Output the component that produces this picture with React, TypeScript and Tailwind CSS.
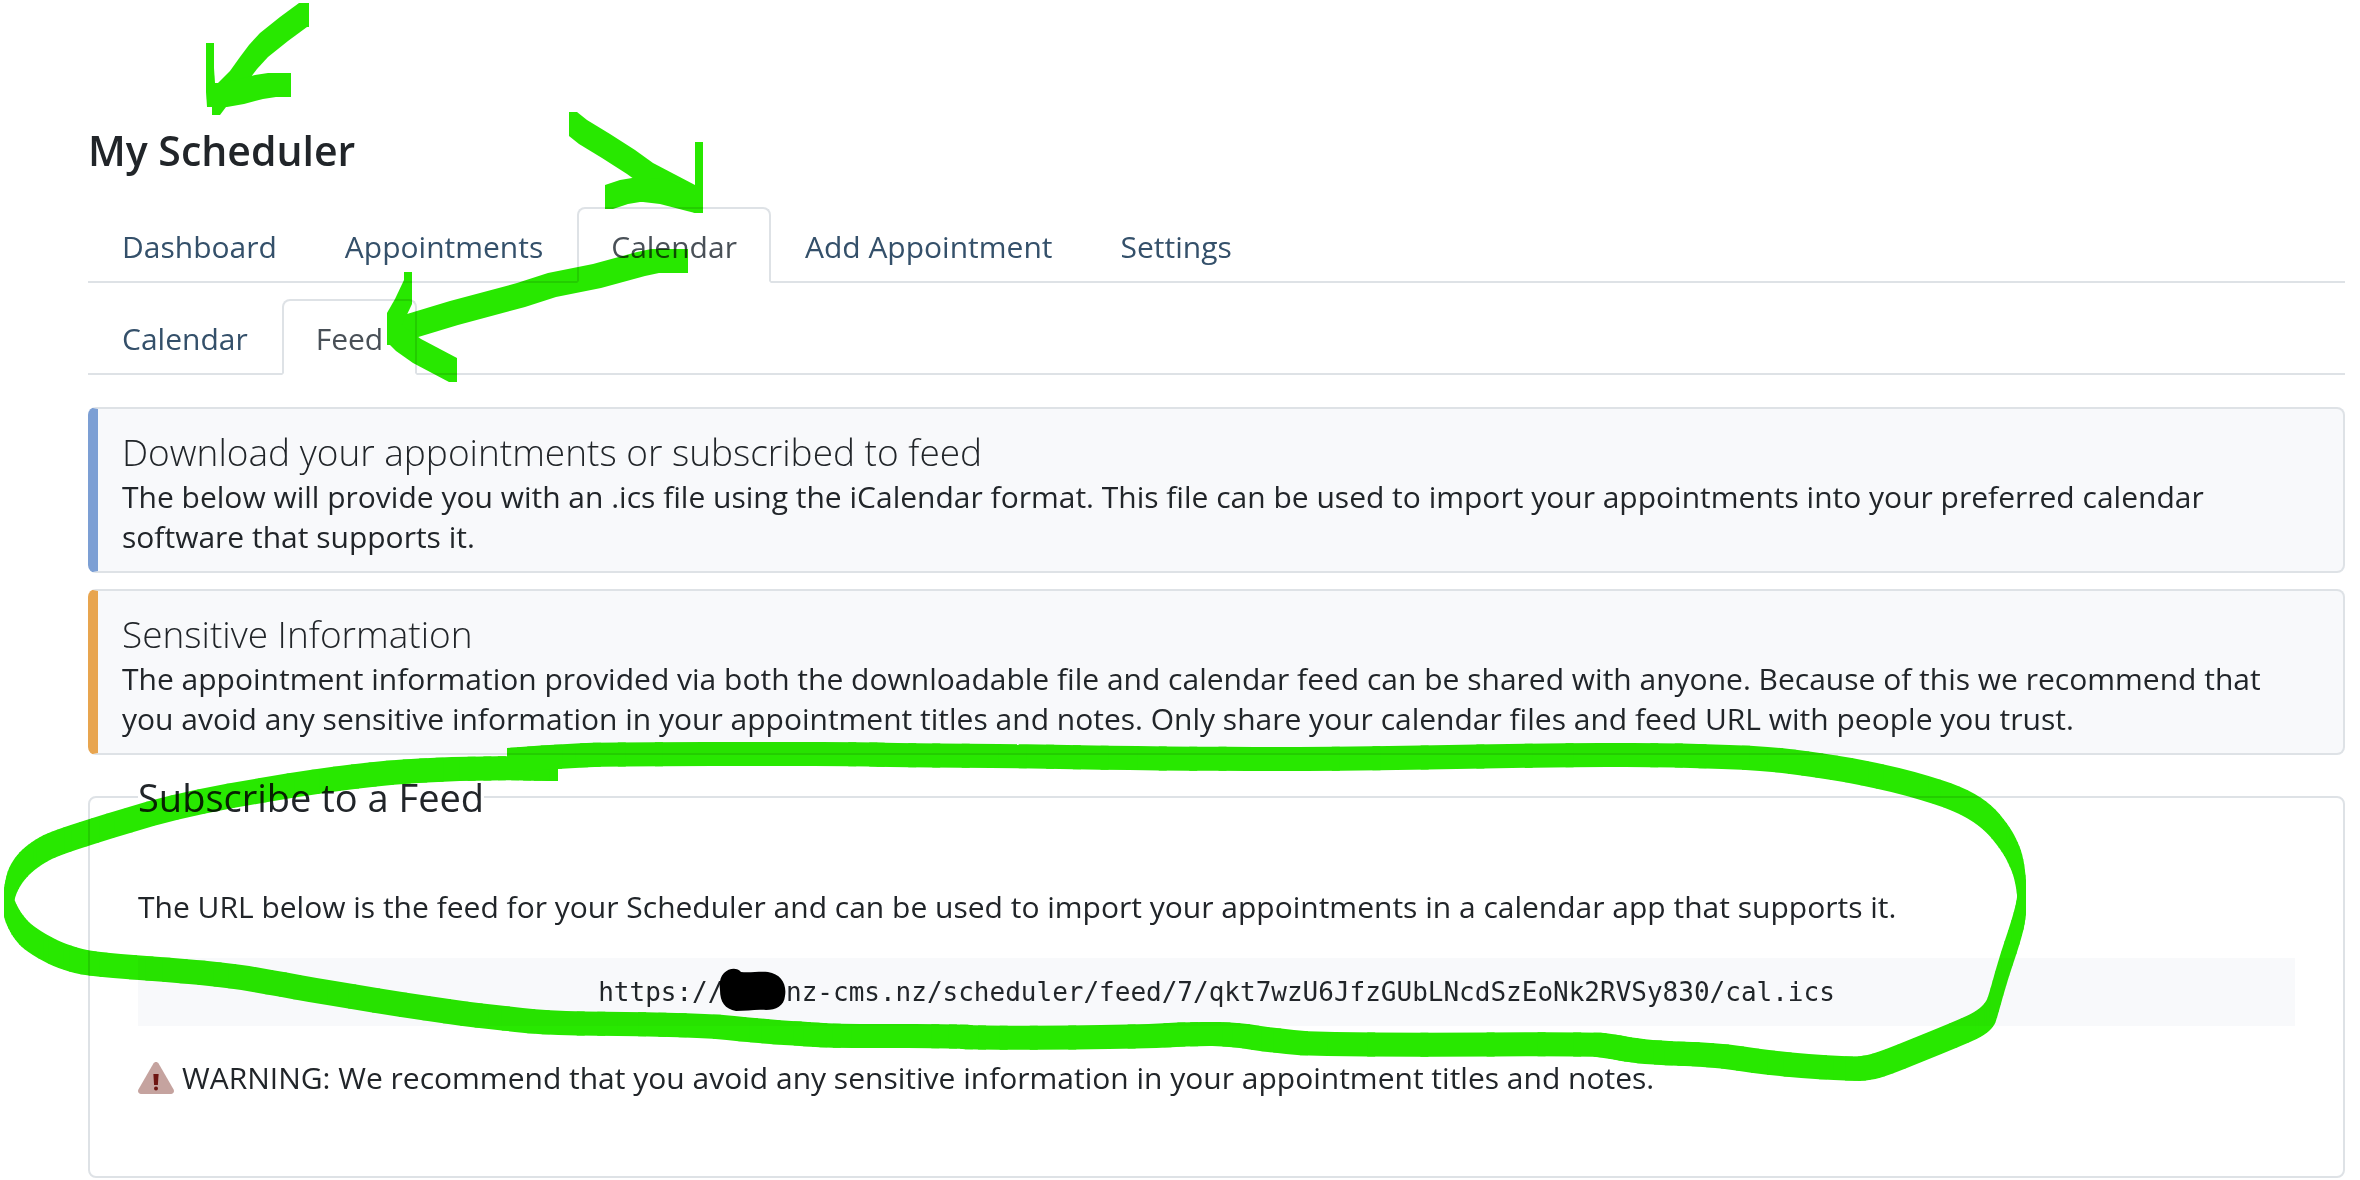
import { useState } from "react"
import clsx from "clsx"

type Point = [number, number]

const mainTabs = ["Dashboard", "Appointments", "Calendar", "Add Appointment", "Settings"]
const calendarTabs = ["Calendar", "Feed"]

// pen strokes, each one a list of pen positions
const arrows: Point[][] = [
  [[305, 15], [303, 15], [284, 29], [264, 45], [253, 57], [244, 69], [234, 83], [222, 95], [216, 103]],
  [[210, 55], [210, 80], [211, 95], [223, 95], [240, 92], [259, 87], [272, 85], [287, 85]],
  [[573, 124], [583, 132], [606, 146], [631, 162], [649, 175], [691, 197], [699, 201]],
  [[699, 154], [699, 201], [691, 199], [664, 192], [647, 190], [636, 190], [624, 192], [609, 197]],
  [[684, 261], [655, 261], [641, 264], [597, 276], [552, 285], [521, 295], [454, 313], [411, 326], [391, 333]],
  [[408, 284], [408, 292], [399, 311], [391, 325], [391, 330], [400, 339], [417, 351], [453, 370]],
]

const loop: Point[] = [
  [554, 769], [511, 768], [448, 769], [382, 773], [310, 782], [183, 804], [96, 830], [62, 841], [45, 848], [30, 858],
  [20, 868], [12, 881], [8, 899], [8, 906], [13, 918], [20, 929], [29, 938], [50, 951], [70, 959], [93, 964],
  [157, 969], [228, 975], [274, 983], [336, 994], [443, 1011], [500, 1018], [550, 1023], [632, 1024], [713, 1026],
  [760, 1031], [804, 1034], [835, 1036], [957, 1036], [976, 1038], [1130, 1037], [1190, 1034], [1232, 1034],
  [1269, 1040], [1325, 1045], [1590, 1044], [1610, 1046], [1630, 1050], [1660, 1053], [1717, 1055], [1778, 1064],
  [1850, 1069], [1869, 1068], [1888, 1062], [1967, 1030], [1982, 1022], [1990, 1014], [1993, 1006], [2003, 970],
  [2018, 925], [2022, 905], [2022, 890], [2019, 868], [2013, 852], [2005, 838], [1990, 819], [1969, 804],
  [1934, 790], [1872, 774], [1811, 764], [1760, 758], [1668, 755], [1564, 755], [1341, 759], [1239, 759],
  [1117, 758], [1010, 756], [892, 755], [862, 754], [616, 754], [565, 756], [511, 760],
]

// cuts the corners off a line of points, the ends stay where they are
function smooth(points: Point[]) {
  const result: Point[] = [points[0]]
  points.slice(1).forEach(([bx, by], i) => {
    const [ax, ay] = points[i]
    result.push([ax * 0.75 + bx * 0.25, ay * 0.75 + by * 0.25])
    result.push([ax * 0.25 + bx * 0.75, ay * 0.25 + by * 0.75])
  })
  result.push(points[points.length - 1])
  return result
}

// the area that the flat 8x24 pen covers on its way from a to b
function sweep([ax, ay]: Point, [bx, by]: Point): string {
  if (ax > bx) {
    return sweep([bx, by], [ax, ay])
  }
  const w = 4
  const h = 12
  if (by >= ay) {
    return `M${ax - w} ${ay - h}H${ax + w}L${bx + w} ${by - h}V${by + h}H${bx - w}L${ax - w} ${ay + h}Z`
  }
  return `M${ax - w} ${ay + h}H${ax + w}L${bx + w} ${by + h}V${by - h}H${bx - w}L${ax - w} ${ay - h}Z`
}

function Stroke({ points }: { points: Point[] }) {
  return (
    <g fill="#28e800">
      {points.slice(1).map((p, i) => (
        <path key={i} d={sweep(points[i], p)} />
      ))}
    </g>
  )
}

function Markup() {
  return (
    <svg
      viewBox="0 0 2360 1180"
      className="pointer-events-none absolute top-0 left-0 w-full mix-blend-multiply"
      aria-hidden="true"
    >
      {arrows.map((points, i) => (
        <Stroke key={i} points={points} />
      ))}
      <Stroke points={smooth(smooth(loop))} />
      <path
        fill="#000"
        d="M724 973C729 968 737 967 741 972C750 973 760 971 768 972C781 974 787 984 785 996C784 1006 776 1010 766 1010C756 1009 747 1011 736 1011C725 1009 720 1002 720 990C719 983 720 977 724 973Z"
      />
    </svg>
  )
}

function Tabs({ items, initial, label }: { items: string[]; initial: string; label: string }) {
  const [active, setActive] = useState(initial)

  return (
    <nav aria-label={label} className="flex border-b-2 border-[#dee2e6]">
      {items.map((item) => (
        <a
          key={item}
          href="#"
          onClick={() => setActive(item)}
          className={clsx(
            "-mb-0.5 rounded-t-lg border-2 px-8 pt-[18px] pb-[14px]",
            active === item
              ? "border-[#dee2e6] border-b-white bg-white text-[#495057]"
              : "border-transparent text-[#34506a]"
          )}
        >
          {item}
        </a>
      ))}
    </nav>
  )
}

function Callout({ title, text, color }: { title: string; text: string; color: string }) {
  return (
    <section className={clsx("rounded-lg border-2 border-l-10 border-[#dee2e6] bg-[#f8f9fb] px-6 pt-[18px] pb-[14px]", color)}>
      <h2 className="text-[37px] leading-[50px] font-light">{title}</h2>
      <p>{text}</p>
    </section>
  )
}

function WarningIcon() {
  return (
    <svg viewBox="0 0 36 32" className="h-8 w-9" aria-hidden="true">
      <path
        fill="#c5a39f"
        d="M15.4 1.5C16.6-.5 19.4-.5 20.6 1.5L35.6 27.5C36.7 29.5 35.3 32 33 32H3C.7 32-.7 29.5.4 27.5Z"
      />
      <path fill="#6e1512" d="M15.4 12H20.6L19.9 23H16.1Z" />
      <circle cx="18" cy="26.5" r="2" fill="#6e1512" />
    </svg>
  )
}

export default function App() {
  return (
    <div className="relative min-h-screen bg-white pt-[126px] pr-[15px] pl-[88px] font-['Open_Sans','Noto_Sans',sans-serif] text-[30px] leading-10 text-[#212529]">
      <h1 className="mb-[33px] text-[41px] leading-12 font-semibold">My Scheduler</h1>

      <Tabs items={mainTabs} initial="Calendar" label="Scheduler" />
      <div className="mt-4">
        <Tabs items={calendarTabs} initial="Feed" label="Calendar" />
      </div>

      <div className="mt-8 flex flex-col gap-4">
        <Callout
          title="Download your appointments or subscribed to feed"
          text="The below will provide you with an .ics file using the iCalendar format. This file can be used to import your appointments into your preferred calendar software that supports it."
          color="border-l-[#7c9fd4]"
        />
        <Callout
          title="Sensitive Information"
          text="The appointment information provided via both the downloadable file and calendar feed can be shared with anyone. Because of this we recommend that you avoid any sensitive information in your appointment titles and notes. Only share your calendar files and feed URL with people you trust."
          color="border-l-[#e8a54f]"
        />
      </div>

      <fieldset className="mt-4 rounded-lg border-2 border-[#dee2e6] px-12 pb-[78px]">
        <legend className="text-[38px] leading-[52px]">Subscribe to a Feed</legend>
        <p className="mt-16">The URL below is the feed for your Scheduler and can be used to import your appointments in a calendar app that supports it.</p>
        <pre className="mt-[31px] bg-[#f8f9fb] py-[14px] text-center font-['DejaVu_Sans_Mono',monospace] text-[26px]">
          https://{"   "}.nz-cms.nz/scheduler/feed/7/qkt7wzU6JfzGUbLNcdSzEoNk2RVSy830/cal.ics
        </pre>
        <p className="mt-8 flex items-center gap-2">
          <WarningIcon />
          WARNING: We recommend that you avoid any sensitive information in your appointment titles and notes.
        </p>
      </fieldset>

      <Markup />
    </div>
  )
}
